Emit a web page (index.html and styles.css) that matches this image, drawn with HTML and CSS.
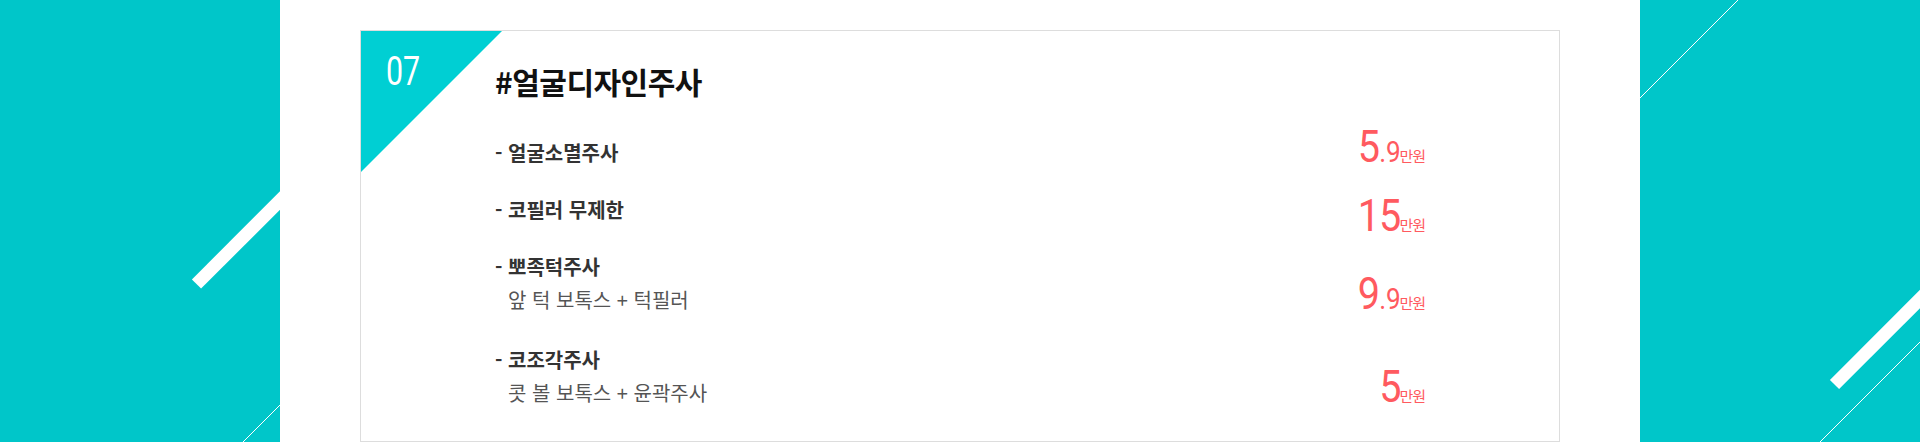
FILE: index.html
```html
<!DOCTYPE html>
<html lang="ko">
<head>
<meta charset="utf-8">
<title>얼굴디자인주사</title>
<link rel="stylesheet" href="styles.css">
</head>
<body>
<div class="page">
  <aside class="side side-left">
    <svg class="deco" width="280" height="442" viewBox="0 0 280 442">
      <line x1="196.5" y1="284" x2="300" y2="180.5" stroke="#fff" stroke-width="13"/>
      <line x1="281" y1="404" x2="241" y2="444" stroke="#fff" stroke-width="1"/>
    </svg>
  </aside>
  <main class="center">
    <section class="card">
      <div class="corner"></div>
      <div class="num-badge"><span class="num-text">07</span></div>
      <h2 class="title">#얼굴디자인주사</h2>
      <ul class="menu">
        <li class="row">
          <div class="desc"><p class="head">- 얼굴소멸주사</p></div>
          <div class="price"><span class="num"><span class="big">5</span><span class="dec">.9</span></span><span class="unit">만원</span></div>
        </li>
        <li class="row row-low">
          <div class="desc"><p class="head">- 코필러 무제한</p></div>
          <div class="price"><span class="num"><span class="big">15</span></span><span class="unit">만원</span></div>
        </li>
        <li class="row">
          <div class="desc"><p class="head">- 뽀족턱주사</p><p class="sub">앞 턱 보톡스 + 턱필러</p></div>
          <div class="price"><span class="num"><span class="big">9</span><span class="dec">.9</span></span><span class="unit">만원</span></div>
        </li>
        <li class="row row-last">
          <div class="desc"><p class="head">- 코조각주사</p><p class="sub">콧 볼 보톡스 + 윤곽주사</p></div>
          <div class="price"><span class="num"><span class="big">5</span></span><span class="unit">만원</span></div>
        </li>
      </ul>
    </section>
  </main>
  <aside class="side side-right">
    <svg class="deco" width="280" height="442" viewBox="0 0 280 442">
      <line x1="99" y1="-1" x2="-1" y2="99" stroke="#fff" stroke-width="1"/>
      <line x1="194.5" y1="384.5" x2="300" y2="279" stroke="#fff" stroke-width="13"/>
      <line x1="281" y1="341" x2="178" y2="444" stroke="#fff" stroke-width="1"/>
    </svg>
  </aside>
</div>
</body>
</html>
```
FILE: styles.css
```css
* { box-sizing: border-box; }
html, body { margin: 0; padding: 0; }
body {
  width: 1920px;
  height: 442px;
  overflow: hidden;
  background: #fff;
  font-family: "Noto Sans CJK KR", "Noto Sans", sans-serif;
}
.page {
  display: flex;
  height: 442px;
}
.side {
  flex: 0 0 280px;
  height: 442px;
  background: #00c6c9;
  overflow: hidden;
}
.deco { display: block; }
.center {
  flex: 0 0 1360px;
  height: 442px;
  display: flex;
  justify-content: center;
  background: #fff;
}
.card {
  position: relative;
  width: 1200px;
  height: 412px;
  margin-top: 30px;
  border: 1px solid #dddddd;
  padding: 30px 134px 0 134px;
}
.corner {
  position: absolute;
  left: 0;
  top: 0;
  width: 141px;
  height: 141px;
  background: #00cfd3;
  clip-path: polygon(0 0, 100% 0, 0 100%);
}
.num-badge {
  position: absolute;
  left: 25px;
  top: 20px;
  color: #fff;
  font-family: Roboto, "Liberation Sans", sans-serif;
  font-size: 41px;
  line-height: 1;
  font-weight: 400;
}
.num-text {
  display: inline-block;
  transform: scaleX(0.74);
  transform-origin: left center;
}
.title {
  margin: 0 0 24px 0;
  font-size: 30px;
  line-height: 40px;
  font-weight: 700;
  color: #111;
  letter-spacing: -0.5px;
}
.menu {
  list-style: none;
  margin: 0;
  padding: 0;
  display: flex;
  flex-direction: column;
  gap: 24px;
}
.row {
  display: flex;
  justify-content: space-between;
  align-items: flex-end;
}
.row-last { margin-top: 3px; }
.desc p { margin: 0; }
.head {
  font-size: 20px;
  line-height: 33px;
  font-weight: 700;
  color: #333;
}
.sub {
  font-size: 20px;
  line-height: 33px;
  font-weight: 400;
  color: #555;
  padding-left: 13px;
}
.price {
  display: flex;
  align-items: baseline;
  color: #ff5a5f;
  line-height: 1;
}
.row-low .price { margin-bottom: -12px; }
.num {
  display: inline-block;
  font-family: Roboto, "Liberation Sans", sans-serif;
  transform: scaleX(0.9);
  transform-origin: right bottom;
  margin-right: -2px;
}
.big { font-size: 44px; letter-spacing: -1px; }
.dec { font-size: 29px; }
.unit {
  font-size: 15px;
  letter-spacing: -1px;
  margin-left: 1px;
}
```
